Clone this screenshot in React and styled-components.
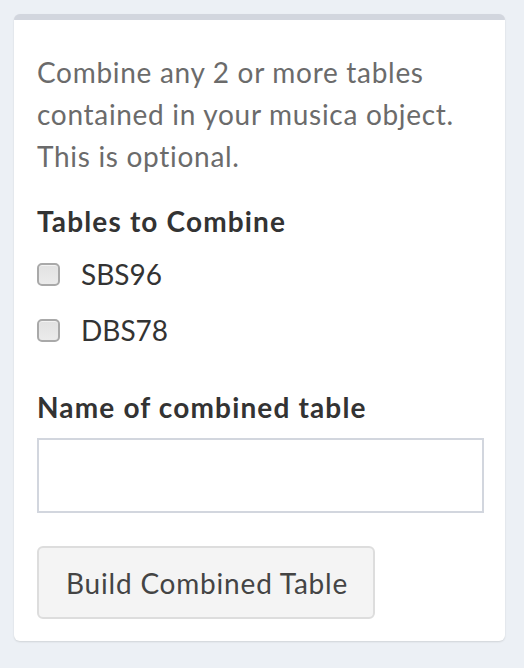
import React, { useState } from 'react';
import styled, { createGlobalStyle } from 'styled-components';

const GlobalStyle = createGlobalStyle`
  html, body {
    margin: 0;
    padding: 0;
    background: #ecf0f5;
  }
  body {
    font-family: 'Lato', 'Liberation Sans', sans-serif;
  }
`;

const Page = styled.div`
  padding: 14px 19px 14px 14px;
  min-height: 640px;
`;

const Box = styled.div`
  background: #ffffff;
  border-top: 6px solid #d2d6de;
  border-radius: 6px;
  box-shadow: 0 1px 2px rgba(0, 0, 0, 0.12);
  padding: 31px 22px 22px 23px;
`;

const Intro = styled.p`
  margin: 0 0 23px 0;
  font-size: 28px;
  line-height: 42px;
  letter-spacing: 0.7px;
  color: #6b6b6b;
`;

const FieldLabel = styled.div`
  font-size: 28px;
  line-height: 42px;
  font-weight: 700;
  letter-spacing: 1.15px;
  color: #333333;
  margin-top: ${props => props.$gap || 0}px;
`;

const CheckList = styled.div`
  display: flex;
  flex-direction: column;
  margin-top: 4px;
`;

const CheckRow = styled.label`
  display: flex;
  align-items: center;
  gap: 21px;
  height: 56px;
  font-size: 28px;
  color: #333333;
  cursor: pointer;
`;

const Check = styled.input`
  appearance: none;
  margin: 0;
  width: 23px;
  height: 23px;
  border-radius: 5px;
  border: 2px solid #a9a9a9;
  background: linear-gradient(#e2e2e2, #ebebeb);
  box-shadow: inset 0 1px 0 rgba(255, 255, 255, 0.6);
  cursor: pointer;

  &:checked {
    background: #3c8dbc;
    border-color: #367fa9;
  }
`;

const TextInput = styled.input`
  display: block;
  box-sizing: border-box;
  width: 447px;
  height: 75px;
  margin-top: 10px;
  border: 2px solid #d2d6de;
  border-radius: 0;
  padding: 0 18px;
  font-family: inherit;
  font-size: 28px;
  color: #555555;
  outline: none;
`;

const Button = styled.button`
  display: block;
  box-sizing: border-box;
  height: 73px;
  margin-top: 33px;
  padding: 0 25px 0 27px;
  background: #f4f4f4;
  border: 2px solid #dddddd;
  border-radius: 6px;
  font-family: inherit;
  font-size: 28px;
  letter-spacing: 0.8px;
  color: #444444;
  cursor: pointer;
`;

const tables = ['SBS96', 'DBS78'];

export default function App() {
  const [picked, setPicked] = useState({});
  const [name, setName] = useState('');

  return (
    <>
      <GlobalStyle />
      <Page>
        <Box>
          <Intro>
            Combine any 2 or more tables contained in your musica object. This is optional.
          </Intro>
          <FieldLabel>Tables to Combine</FieldLabel>
          <CheckList>
            {tables.map(t => (
              <CheckRow key={t}>
                <Check
                  type="checkbox"
                  checked={!!picked[t]}
                  onChange={() => setPicked({ ...picked, [t]: !picked[t] })}
                />
                {t}
              </CheckRow>
            ))}
          </CheckList>
          <FieldLabel $gap={28}>Name of combined table</FieldLabel>
          <TextInput value={name} onChange={e => setName(e.target.value)} />
          <Button>Build Combined Table</Button>
        </Box>
      </Page>
    </>
  );
}
